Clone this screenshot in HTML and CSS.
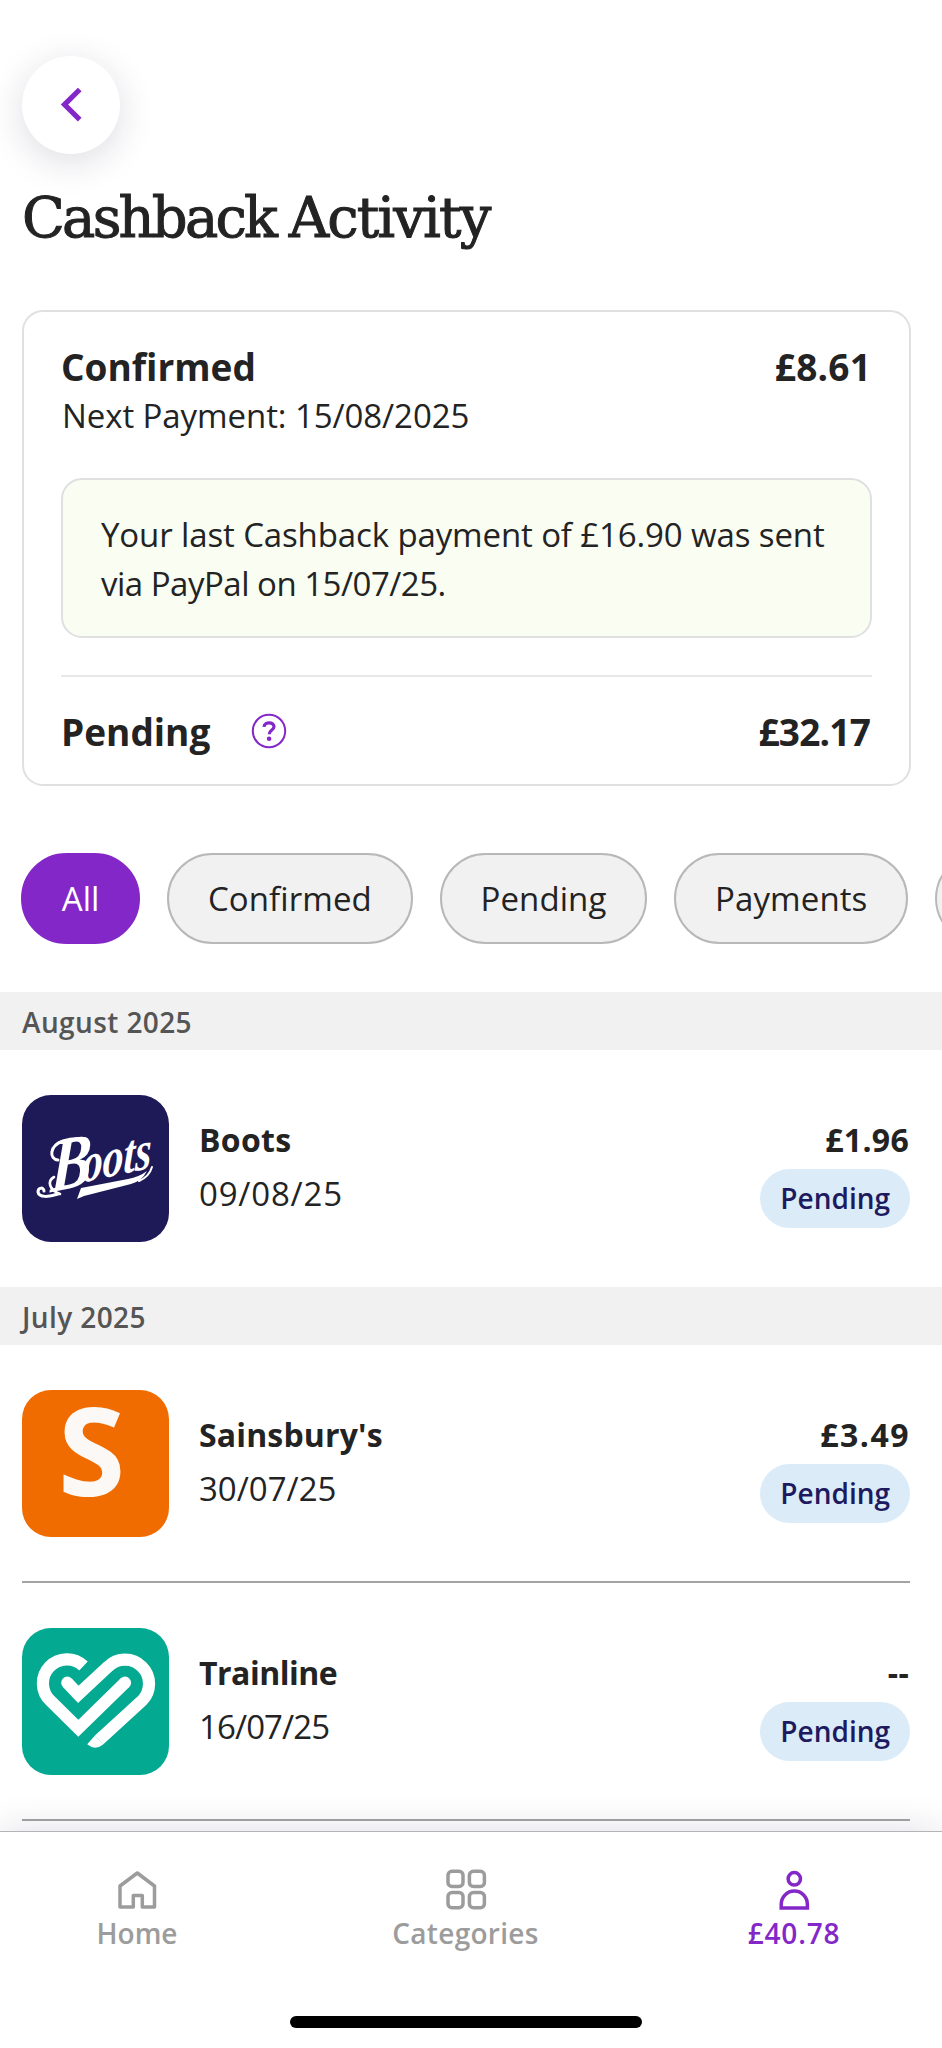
FILE: index.html
```html
<!DOCTYPE html>
<html lang="en">
<head>
<meta charset="utf-8">
<title>Cashback Activity</title>
<link rel="stylesheet" href="styles.css">
</head>
<body>
<main class="screen">
  <header class="header">
    <button class="back" aria-label="Back"><svg width="98" height="98" viewBox="0 0 98 98"><path d="M57.7 33.5 42.5 48.6 57.7 63.7" fill="none" stroke="#8427c8" stroke-width="5.2"/></svg></button>
    <h1 class="title">Cashback <span class="title-end">Activity</span></h1>
  </header>

  <section class="card">
    <div class="summary"><h2 class="summary-label">Confirmed</h2><span class="summary-amount">£8.61</span></div>
    <p class="next">Next Payment: 15/08/2025</p>
    <p class="note">Your last Cashback payment of £16.90 was sent <span class="note-end">via PayPal on 15/07/25.</span></p>
    <div class="summary summary-pending">
      <h2 class="summary-label">Pending</h2>
      <svg class="help" width="36" height="36" viewBox="0 0 36 36"><circle cx="18" cy="18" r="16.2" fill="none" stroke="#8427c8" stroke-width="2"/><path d="M13 13.8C13.3 8.4 23.2 8.6 23 13.8 22.9 17.2 18.2 16.8 18.2 21.3" fill="none" stroke="#8427c8" stroke-width="3.2"/><circle cx="18.1" cy="25.8" r="2.3" fill="#8427c8"/></svg>
      <span class="summary-amount tight">£32.17</span>
    </div>
  </section>

  <nav class="chips">
    <button class="chip chip-active">All</button>
    <button class="chip">Confirmed</button>
    <button class="chip">Pending</button>
    <button class="chip">Payments</button>
    <button class="chip chip-cut" aria-label="More"></button>
  </nav>

  <h3 class="month">August 2025</h3>
  <article class="row">
    <svg class="logo" viewBox="0 0 147 147">
      <rect width="147" height="147" fill="#1e1a57"/>
      <g transform="translate(30 97) rotate(-12) skewX(-14)">
        <text class="boots-b" x="-2" y="0" textLength="42" lengthAdjust="spacingAndGlyphs">B</text>
        <text class="boots-rest" x="30" y="-3" textLength="71" lengthAdjust="spacingAndGlyphs">oots</text>
      </g>
      <g fill="none" stroke="#fff" stroke-linecap="round">
        <path d="M36 99C27 102 17 103 16 97 16 92 22 92 22 96" stroke-width="3"/>
        <path d="M36 65C27 64 27 51 41 46 49 43 56 43 64 44" stroke-width="3"/>
        <path d="M38 99C27 95 25 86 32 82" stroke-width="2.600"/>
        <path d="M130 72C128 79 124 83 117 86" stroke-width="2"/>
      </g>
      <path d="M55 104 59 93 106 84Q117 82 125 76 120 86 109 89L62 101Z" fill="#fff"/>
    </svg>
    <div class="info"><h4 class="name name-boots">Boots</h4><p class="date date-wide">09/08/25</p></div>
    <div class="status"><span class="amount">£1.96</span><span class="pill">Pending</span></div>
  </article>

  <h3 class="month">July 2025</h3>
  <article class="row row-line">
    <svg class="logo" viewBox="0 0 147 147">
      <rect width="147" height="147" fill="#f06c00"/>
      <text class="sains" x="36" y="106">S</text>
    </svg>
    <div class="info"><h4 class="name">Sainsbury's</h4><p class="date">30/07/25</p></div>
    <div class="status"><span class="amount amount-wide">£3.49</span><span class="pill">Pending</span></div>
  </article>
  <article class="row row-line">
    <svg class="logo" viewBox="0 0 147 147">
      <rect width="147" height="147" fill="#04a991"/>
      <g fill="none" stroke="#fff" stroke-width="12.200">
        <path d="M61.500 38A24 24 0 1 0 28.300 72.700L56.300 100.300 103 54.700"/>
        <path d="M45.300 54.700 56.300 66.300 86 38.700A24 24 0 0 1 120 72.700L77 112"/>
      </g>
      <g fill="#fff"><circle cx="103" cy="54.700" r="6.100"/><circle cx="45.300" cy="54.700" r="6.100"/><path d="M73 107.500 65.200 116.300Q73 123 81.200 116.400Z"/></g>
    </svg>
    <div class="info"><h4 class="name name-train">Trainline</h4><p class="date date-tight">16/07/25</p></div>
    <div class="status"><span class="amount">--</span><span class="pill">Pending</span></div>
  </article>
</main>

<footer class="tabbar">
  <nav class="tabs">
    <a class="tab"><svg width="48" height="48" viewBox="0 0 48 48"><path d="M7 41V20L24.300 7 41.500 20V41H29.300V29.500H20.300V41Z"/></svg><span>Home</span></a>
    <a class="tab"><svg width="48" height="48" viewBox="0 0 48 48"><rect x="6" y="5.300" width="15" height="15.200" rx="4"/><rect x="27.400" y="5.300" width="15" height="15.200" rx="4"/><rect x="6" y="26.500" width="15" height="15.200" rx="4"/><rect x="27.400" y="26.500" width="15" height="15.200" rx="4"/></svg><span class="wide">Categories</span></a>
    <a class="tab tab-active"><svg width="48" height="48" viewBox="0 0 48 48"><circle cx="24.300" cy="12.800" r="6.200"/><path d="M11.200 42V38.500C11.200 31 17 25.100 24.300 25.100S37.400 31 37.400 38.500V42Z"/></svg><span class="wider">£40.78</span></a>
  </nav>
  <div class="home-indicator"></div>
</footer>
</body>
</html>
```
FILE: styles.css
```css
* { box-sizing: border-box; margin: 0; }
body {
  display: flex;
  flex-direction: column;
  width: 942px;
  height: 2048px;
  overflow: hidden;
  background: #fff;
  color: #232323;
  font-family: "Open Sans", "Noto Sans", sans-serif;
}
button { font: inherit; color: inherit; padding: 0; border: 0; }
.screen { flex: 1; min-height: 0; overflow: hidden; }
.header { padding: 56px 22px 0; }
.back {
  display: block;
  width: 98px;
  height: 98px;
  border-radius: 50%;
  background: #fff;
  box-shadow: 0 8px 36px rgba(30, 30, 70, .15);
}
.back svg { display: block; }
.title {
  margin-top: 34px;
  font: 400 56px/60px "DejaVu Serif", serif;
  letter-spacing: -2.8px;
  word-spacing: -1.500px;
  -webkit-text-stroke: 1px #232323;
}
.title-end { letter-spacing: -1.900px; }

.card {
  width: 889px;
  height: 476px;
  margin: 62px 0 0 22px;
  padding: 30px 37px 0;
  border: 2px solid #e0e0e0;
  border-radius: 21px;
}
.summary { display: flex; align-items: center; height: 48px; font-size: 37px; font-weight: 700; }
.summary-label { font-size: 37px; font-weight: 700; }
.summary-amount { margin-left: auto; padding-right: 1px; letter-spacing: .2px; }
.summary-amount.tight { padding-right: 2px; letter-spacing: -.8px; }
.next { margin-top: 2px; padding-left: 1px; font-size: 33px; line-height: 48px; letter-spacing: -.08px; }
.note {
  margin-top: 38px;
  padding: 30px 0 28px 38px;
  border: 2px solid #e0e0e0;
  border-radius: 21px;
  background: #f9fdf2;
  font-size: 33px;
  line-height: 49px;
  letter-spacing: -.12px;
}
.note-end { display: block; letter-spacing: -.5px; }
.summary-pending { height: 81px; margin-top: 37px; padding-top: 29px; border-top: 2px solid #e8e8e8; }
.help { margin-left: 41px; }

.chips { display: flex; gap: 27px; margin: 67px 0 0 21px; }
.chip {
  flex: none;
  height: 91px;
  padding: 0 38.800px;
  border: 2px solid #b8b8b8;
  border-radius: 46px;
  background: #f1f1f1;
  font-size: 33px;
  letter-spacing: .1px;
}
.chip-active { border-color: #8427c8; background: #8427c8; color: #fff; letter-spacing: 0; }
.chip-cut { width: 200px; }

.month {
  height: 58px;
  padding: 1px 22px 0;
  background: #f1f1f1;
  color: #555;
  font-size: 28px;
  font-weight: 600;
  line-height: 58px;
  letter-spacing: .4px;
}
.chips + .month { margin-top: 48px; }

.row { display: flex; margin: 0 32px 0 22px; padding: 45px 0; }
.row-line { padding-bottom: 44px; border-bottom: 2px solid #a3a3a3; }
.logo { flex: none; width: 147px; height: 147px; border-radius: 29px; }
.boots-b { font: italic 700 74px "Liberation Serif", serif; fill: #fff; }
.boots-rest { font: italic 700 54px "Liberation Serif", serif; fill: #fff; }
.sains { font: 700 122px "Open Sans", sans-serif; fill: #fcf8f6; }
.info { margin: 21px 0 0 30px; }
.name { font-size: 32px; font-weight: 700; line-height: 48px; letter-spacing: .15px; }
.name-boots { letter-spacing: .3px; }
.name-train { letter-spacing: -.5px; }
.date { margin-top: 6px; font-size: 33px; line-height: 48px; }
.date-wide { letter-spacing: .8px; }
.date-tight { letter-spacing: -.9px; }
.status { display: flex; flex-direction: column; align-items: flex-end; gap: 5px; margin: 21px 0 0 auto; }
.amount { padding-right: 1px; font-size: 32px; font-weight: 700; line-height: 48px; letter-spacing: .3px; }
.amount-wide { padding-right: 0; letter-spacing: 1.500px; }
.pill {
  padding: 0 20px;
  border-radius: 30px;
  background: #dbecf8;
  color: #1e1a60;
  font-size: 28px;
  font-weight: 600;
  line-height: 59px;
}

.tabbar {
  position: relative;
  height: 217px;
  border-top: 1px solid #b4b4b8;
  background: #fff;
  box-shadow: 0 0 36px rgba(30, 30, 70, .14);
}
.tabs { display: flex; justify-content: space-between; padding: 34px 63px 0 52px; }
.tab {
  display: flex;
  flex-direction: column;
  align-items: center;
  gap: 1px;
  width: 170px;
  color: #9c9c9c;
  font-size: 28px;
  font-weight: 600;
  line-height: 36px;
}
.tab svg { fill: none; stroke: currentColor; stroke-width: 3.500; stroke-linejoin: round; }
.tab-active { color: #8427c8; }
.tab-active svg { stroke-linejoin: miter; }
.wide { letter-spacing: .3px; }
.wider { letter-spacing: .8px; }
.home-indicator { width: 352px; height: 12px; margin: 65px 0 0 290px; border-radius: 6px; background: #000; }
```
